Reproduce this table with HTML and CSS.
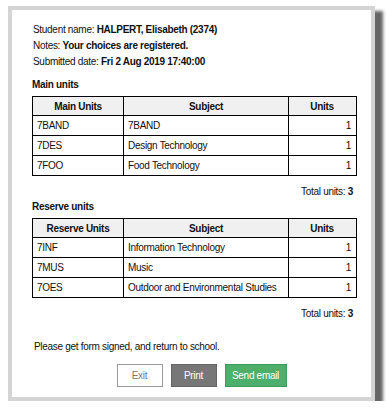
FILE: index.html
```html
<!DOCTYPE html>
<html lang="en">
<head>
  <meta charset="UTF-8">
  <title>Subject Choices</title>
  <link rel="stylesheet" href="styles.css">
</head>
<body>

  <div class="panel">
    <div class="info">
      <p>Student name: <strong>HALPERT, Elisabeth (2374)</strong></p>
      <p>Notes: <strong>Your choices are registered.</strong></p>
      <p>Submitted date: <strong>Fri 2 Aug 2019 17:40:00</strong></p>
    </div>

    <h3>Main units</h3>
    <table class="units">
      <tr>
        <th class="code">Main Units</th>
        <th class="subject">Subject</th>
        <th class="num">Units</th>
      </tr>
      <tr><td>7BAND</td><td>7BAND</td><td class="num">1</td></tr>
      <tr><td>7DES</td><td>Design Technology</td><td class="num">1</td></tr>
      <tr><td>7FOO</td><td>Food Technology</td><td class="num">1</td></tr>
    </table>
    <p class="total">Total units: <strong>3</strong></p>

    <h3 class="after-total">Reserve units</h3>
    <table class="units">
      <tr>
        <th class="code">Reserve Units</th>
        <th class="subject">Subject</th>
        <th class="num">Units</th>
      </tr>
      <tr><td>7INF</td><td>Information Technology</td><td class="num">1</td></tr>
      <tr><td>7MUS</td><td>Music</td><td class="num">1</td></tr>
      <tr><td>7OES</td><td>Outdoor and Environmental Studies</td><td class="num">1</td></tr>
    </table>
    <p class="total">Total units: <strong>3</strong></p>

    <p class="note">Please get form signed, and return to school.</p>

    <div class="actions">
      <button class="btn btn-exit">Exit</button>
      <button class="btn btn-print">Print</button>
      <button class="btn btn-send">Send email</button>
    </div>
  </div>

</body>
</html>
```

FILE: styles.css
```css
body {
  margin: 0;
  background: #fff;
  font-family: "Liberation Sans", Arial, sans-serif;
  font-size: 10px;
  letter-spacing: -0.3px;
  color: #111;
}

p {
  margin: 0;
}

.panel {
  box-sizing: border-box;
  width: 367px;
  height: 395px;
  margin: 6px 0 0 8px;
  padding: 12px 14px 0 20px;
  border: 4px solid #d4d4d4;
  background: #fff;
  box-shadow: 8px 5px 3px #666;
}

.info {
  padding-left: 1px;
}

.info p {
  line-height: 16px;
}

h3 {
  margin: 7px 0 3px 0;
  font-size: 10px;
  line-height: 16px;
}

h3.after-total {
  margin-top: 0;
}

.units {
  width: 325px;
  border-collapse: collapse;
  table-layout: fixed;
}

.units th,
.units td {
  border: 1px solid #000;
  height: 19px;
  padding: 0 4px;
  text-align: left;
}

.units th {
  background: #f0f0f0;
  text-align: center;
  height: 18px;
}

.units .code {
  width: 82px;
}

.units .subject {
  width: 156px;
}

.units .num {
  text-align: right;
  padding-right: 5px;
}

.units th.num {
  text-align: center;
}

.total {
  text-align: right;
  line-height: 14px;
  margin: 9px 4px 0 0;
}

.note {
  margin: 19px 0 0 2px;
  line-height: 14px;
}

.actions {
  display: flex;
  justify-content: center;
  gap: 8px;
  margin-top: 10px;
  padding-left: 14px;
}

.btn {
  height: 23px;
  padding: 0;
  font-family: "Liberation Sans", Arial, sans-serif;
  font-size: 10px;
  letter-spacing: -0.3px;
  border: 1px solid;
  border-radius: 0;
}

.btn-exit {
  width: 46px;
  background: #fff;
  border-color: #999;
  color: #777;
}

.btn-print {
  width: 46px;
  background: #777;
  border-color: #666;
  color: #fff;
}

.btn-send {
  width: 62px;
  background: #4caf6b;
  border-color: #3e9c5b;
  color: #fff;
}
```
